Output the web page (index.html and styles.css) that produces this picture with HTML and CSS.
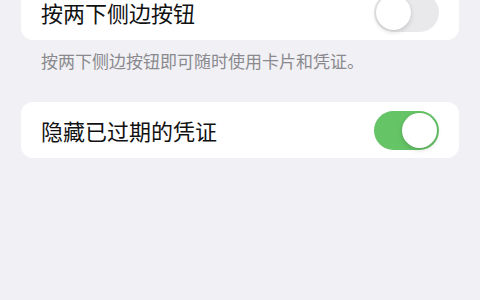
FILE: index.html
```html
<!DOCTYPE html>
<html lang="zh-CN">
<head>
<meta charset="utf-8">
<link rel="stylesheet" href="styles.css">
</head>
<body>
<div class="page">
  <div class="card first">
    <span class="label">按两下侧边按钮</span>
    <span class="toggle off"><span class="knob"></span></span>
  </div>
  <p class="note">按两下侧边按钮即可随时使用卡片和凭证。</p>
  <div class="card">
    <span class="label">隐藏已过期的凭证</span>
    <span class="toggle on"><span class="knob"></span></span>
  </div>
</div>
</body>
</html>
```
FILE: styles.css
```css
html, body {
  margin: 0;
  padding: 0;
  background: #f1f0f5;
  width: 480px;
  height: 300px;
  overflow: hidden;
}
.page {
  padding: 0 21px;
  font-family: "Noto Sans CJK SC", "Noto Sans", sans-serif;
}
.card {
  background: #ffffff;
  border-radius: 12px;
  height: 56px;
  display: flex;
  align-items: center;
  justify-content: space-between;
  padding: 0 20px 0 20px;
  box-sizing: border-box;
}
.card.first {
  margin-top: -16px;
}
.label {
  font-size: 22px;
  color: #111;
  line-height: 1;
}
.note {
  margin: 0;
  padding: 10px 20px 0 20px;
  height: 62px;
  box-sizing: border-box;
  font-size: 17px;
  line-height: 22px;
  color: #8a8a8e;
}
.toggle {
  width: 65px;
  height: 39px;
  border-radius: 20px;
  display: flex;
  align-items: center;
  padding: 2px;
  box-sizing: border-box;
}
.toggle.off {
  background: #e9e9eb;
  justify-content: flex-start;
}
.toggle.on {
  background: #65c466;
  justify-content: flex-end;
}
.knob {
  width: 35px;
  height: 35px;
  border-radius: 50%;
  background: #fff;
  box-shadow: 0 2px 5px rgba(0,0,0,0.15), 0 0 1px rgba(0,0,0,0.1);
}
```
